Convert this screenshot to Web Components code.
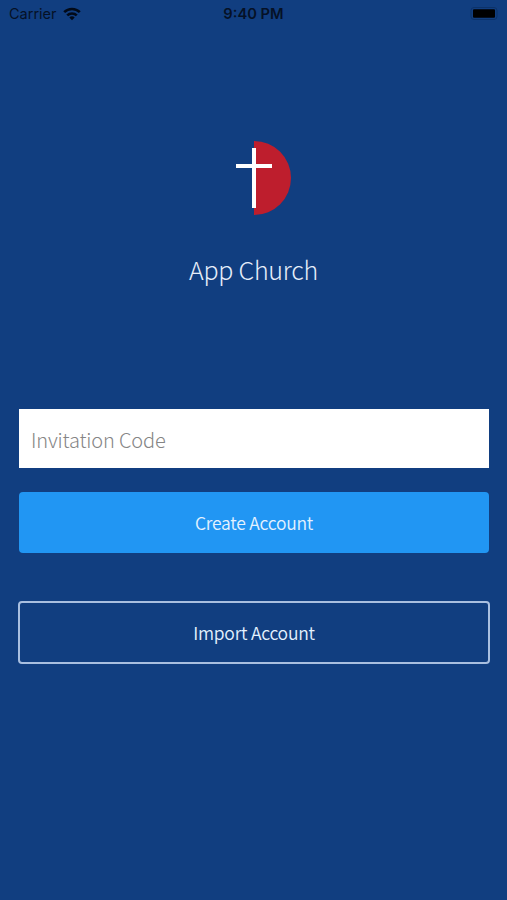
<!DOCTYPE html>
<html lang="en">
<head>
<meta charset="utf-8">
<title>App Church</title>
<style>
  body {
    margin: 0;
    background: #113e80;
    font-family: "Noto Sans CJK SC", "Noto Sans", sans-serif;
    font-weight: 300;
  }
</style>
</head>
<body>
<church-welcome>
  <status-bar slot="status" carrier="Carrier" time="9:40 PM"></status-bar>
  <church-brand slot="brand">App Church</church-brand>
  <code-field placeholder="Invitation Code"></code-field>
  <app-button>Create Account</app-button>
  <app-button variant="outline">Import Account</app-button>
</church-welcome>

<script>
class StatusBar extends HTMLElement {
  connectedCallback() {
    const shadow = this.attachShadow({ mode: "open" });

    shadow.innerHTML = `
      <style>
        :host {
          display: grid;
          grid-template-columns: 1fr auto 1fr;
          align-items: center;
          height: 28px;
          padding: 0 9px;
          font: 400 14.5px/28px Inter, sans-serif;
          color: #051126;
        }

        .left {
          display: flex;
          align-items: center;
          gap: 6px;
        }

        .time {
          font-size: 14.7px;
          font-weight: 600;
        }

        svg {
          display: block;
        }

        .battery {
          justify-self: end;
        }
      </style>

      <div class="left">
        <span>${this.getAttribute("carrier")}</span>
        <svg width="18" height="14" viewBox="0 0 18 14" fill="none" stroke="#020a18" stroke-width="2.6">
          <path d="M1.2 5.2C5.5 0.9 12.5 0.9 16.8 5.2" />
          <path d="M4.2 8.4C6.9 5.8 11.1 5.8 13.8 8.4" />
          <path d="M9 13.2L6.3 10.4C7.8 9 10.2 9 11.7 10.4Z" fill="#020a18" stroke="none" />
        </svg>
      </div>
      <span class="time">${this.getAttribute("time")}</span>
      <svg class="battery" width="28" height="14" viewBox="0 0 28 14">
        <rect x="1" y="0.5" width="26" height="12" rx="3" fill="none" stroke="#0c3269" />
        <rect x="3" y="2.2" width="22" height="8.6" rx="1" fill="#000" />
      </svg>
    `;
  }
}

class ChurchBrand extends HTMLElement {
  connectedCallback() {
    const shadow = this.attachShadow({ mode: "open" });

    shadow.innerHTML = `
      <style>
        :host {
          display: flex;
          flex-direction: column;
          align-items: center;
          gap: 34px;
          font-size: 25px;
          line-height: 40px;
          letter-spacing: -0.25px;
          color: #e6eefa;
        }

        svg {
          display: block;
        }
      </style>

      <svg width="74" height="74" viewBox="0 0 74 74">
        <path d="M37 0A37 37 0 0 1 37 74Z" fill="#be1e2d" />
        <path d="M37 7V67M19 25H55" stroke="#fff" stroke-width="4" />
      </svg>
      <div><slot></slot></div>
    `;
  }
}

class CodeField extends HTMLElement {
  connectedCallback() {
    const shadow = this.attachShadow({ mode: "open" });

    shadow.innerHTML = `
      <style>
        :host {
          display: block;
        }

        input {
          display: block;
          box-sizing: border-box;
          width: 100%;
          height: 59px;
          padding: 2px 12px 0;
          border: 0;
          border-radius: 0;
          background: #fff;
          font: inherit;
          font-size: 20px;
          letter-spacing: -0.17px;
          color: #333;
        }

        input::placeholder {
          color: #858585;
        }
      </style>

      <input type="text" placeholder="${this.getAttribute("placeholder")}">
    `;
  }
}

class AppButton extends HTMLElement {
  connectedCallback() {
    const shadow = this.attachShadow({ mode: "open" });

    shadow.innerHTML = `
      <style>
        :host {
          display: block;
        }

        button {
          display: block;
          box-sizing: border-box;
          width: 100%;
          height: 61px;
          padding: 0;
          border: 0;
          border-radius: 4px;
          background: #2196f3;
          font: inherit;
          font-size: 17.5px;
          font-weight: 350;
          letter-spacing: -0.25px;
          color: #e4f2ff;
        }

        :host([variant="outline"]) button {
          height: 63px;
          border: 2px solid #a9bfe0;
          background: none;
        }
      </style>

      <button type="button"><slot></slot></button>
    `;
  }
}

class ChurchWelcome extends HTMLElement {
  connectedCallback() {
    const shadow = this.attachShadow({ mode: "open" });

    shadow.innerHTML = `
      <style>
        :host {
          display: flex;
          flex-direction: column;
          height: 900px;
        }

        header {
          padding-top: 113px;
        }

        main {
          display: flex;
          flex-direction: column;
          padding: 120px 18px 0 19px;
        }

        ::slotted(app-button) {
          margin-top: 24px;
        }

        ::slotted(app-button[variant="outline"]) {
          margin: 48px -1px 0;
        }
      </style>

      <slot name="status"></slot>
      <header><slot name="brand"></slot></header>
      <main><slot></slot></main>
    `;
  }
}

customElements.define("status-bar", StatusBar);
customElements.define("church-brand", ChurchBrand);
customElements.define("code-field", CodeField);
customElements.define("app-button", AppButton);
customElements.define("church-welcome", ChurchWelcome);
</script>
</body>
</html>
